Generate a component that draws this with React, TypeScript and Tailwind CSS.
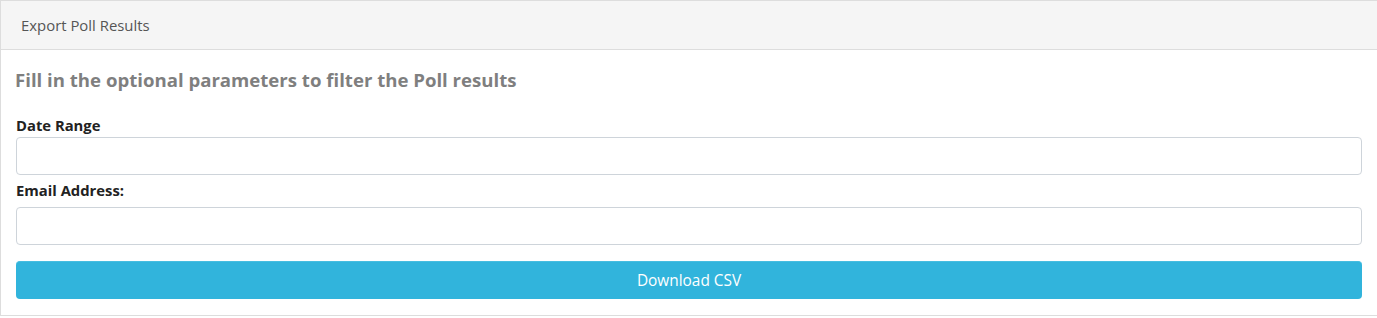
import React from "react";

const font = { fontFamily: '"Open Sans", "Noto Sans", sans-serif' };

const App = () => {
  return (
    <div className="w-[1377px] bg-white" style={font}>
      <div className="border border-[#dddddd] border-r-0">
        <div className="h-[49px] flex items-center px-[20px] bg-[#f5f5f5] border-b border-[#dddddd] text-[14.9px] text-[#555555]">
          Export Poll Results
        </div>
        <div className="pl-[15px] pr-[15px] pt-[17px] pb-[16px]">
          <h4 className="h-[26px] leading-[26px] text-[18.6px] font-bold text-[#7f7f7f] -ml-[1px]">
            Fill in the optional parameters to filter the Poll results
          </h4>
          <label className="block mt-[22px] h-[20px] leading-[20px] text-[14.8px] font-bold text-[#222222]">
            Date Range
          </label>
          <input className="block mt-[2px] w-full h-[38px] rounded-[4px] border border-[#ced4da] bg-white outline-none" />
          <label className="block mt-[5px] h-[20px] leading-[20px] text-[14.8px] font-bold text-[#222222]">
            Email Address:
          </label>
          <input className="block mt-[7px] w-full h-[38px] rounded-[4px] border border-[#ced4da] bg-white outline-none" />
          <button className="block mt-[16px] w-full h-[38px] rounded-[4px] bg-[#31b4dc] border-t border-[#46bde0] text-white text-[15.4px]">
            Download CSV
          </button>
        </div>
      </div>
    </div>
  );
};

export default App;
